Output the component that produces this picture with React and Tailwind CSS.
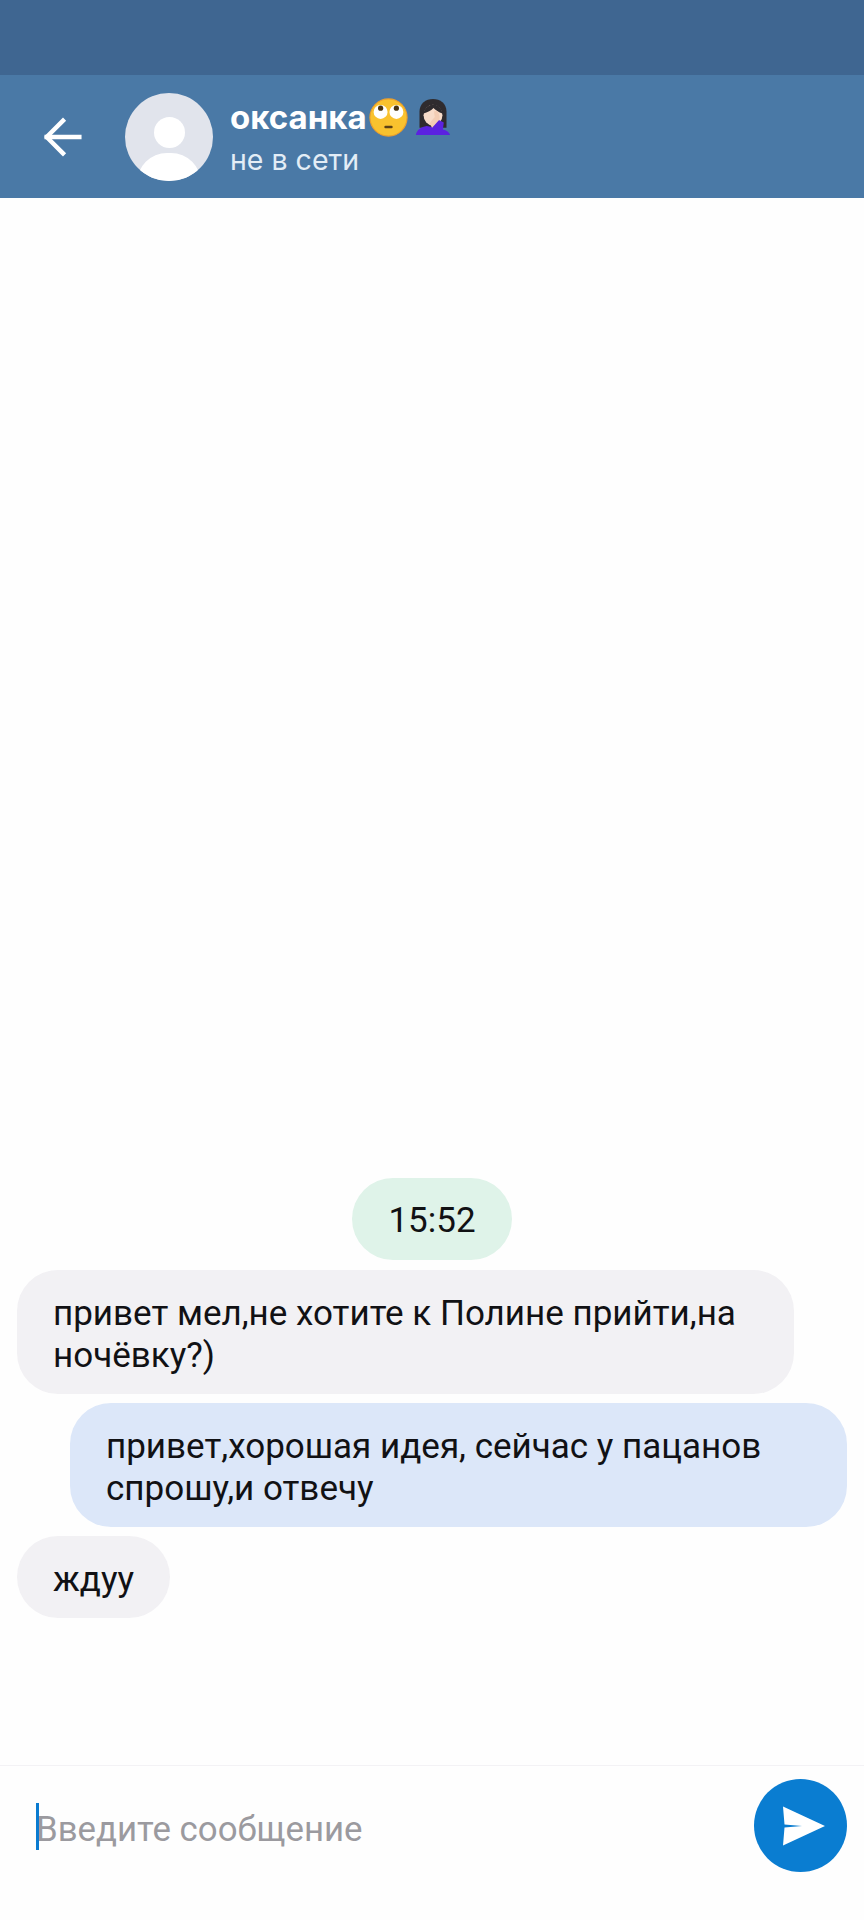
import React from "react";
import { ArrowLeft } from "lucide-react";

const messages = [
  { id: 1, mine: false, text: "привет мел,не хотите к Полине прийти,на ночёвку?)" },
  { id: 2, mine: true, text: "привет,хорошая идея, сейчас у пацанов спрошу,и отвечу" },
  { id: 3, mine: false, text: "ждуу" },
];

const RollingEyes = () => (
  <svg width="39" height="39" viewBox="0 0 42 42">
    <circle cx="21" cy="21" r="20" fill="#f9c22e" />
    <circle cx="21" cy="21" r="20" fill="none" stroke="#ee9f2a" strokeWidth="1.2" />
    <circle cx="12.5" cy="15" r="7.5" fill="#fff" />
    <circle cx="29.5" cy="15" r="7.5" fill="#fff" />
    <circle cx="12.5" cy="11" r="2.8" fill="#4a3410" />
    <circle cx="29.5" cy="11" r="2.8" fill="#4a3410" />
    <rect x="16.5" y="30" width="9" height="2.6" rx="1.3" fill="#5b4015" />
  </svg>
);

const FacepalmGirl = () => (
  <svg width="36" height="40" viewBox="0 0 40 42">
    <path d="M5 33V15C5 6 12 1 20 1s15 5 15 14v18z" fill="#2f2b2e" />
    <ellipse cx="20" cy="19" rx="10.5" ry="11.5" fill="#f8dcc9" />
    <path d="M9.5 17c1-7 7-10 11-10 4 0 9 3 10 10-4-1-8-4-10-6-2 3-7 5-11 6z" fill="#2f2b2e" />
    <path d="M1 41c1-6 6-9 12-10l6 1 7-8 6 3-1 8c4 1 7 3 8 6z" fill="#5b22e0" />
    <path d="M19 33l8-9c1-3 0-8-3-10l-3 1 1 6-6 7z" fill="#f3cdb4" />
  </svg>
);

export default function App() {
  return (
    <div className="flex h-[1920px] w-[864px] flex-col bg-[#fefefe] font-['Roboto',sans-serif]">
      {/* status bar */}
      <div className="h-[75px] bg-[#3f6691]" />

      {/* chat header */}
      <div className="flex h-[123px] items-center bg-[#4a79a6] text-white">
        <div className="flex w-[125px] justify-center">
          <ArrowLeft size={56} strokeWidth={1.9} strokeLinecap="square" />
        </div>
        <div className="relative h-[88px] w-[88px] overflow-hidden rounded-full bg-[#e1e4ec]">
          <div className="mx-auto mt-[24px] h-[31px] w-[31px] rounded-full bg-white" />
          <div className="mx-auto mt-[5px] h-[60px] w-[64px] rounded-full bg-white" />
        </div>
        <div className="ml-[17px] flex flex-col font-['Inter',sans-serif]">
          <div className="-mt-[2px] flex h-[44px] items-center">
            <span className="text-[33px] font-bold leading-none">оксанка</span>
            <span className="ml-[2px] flex"><RollingEyes /></span>
            <span className="ml-[7px] flex"><FacepalmGirl /></span>
          </div>
          <span className="mt-[5px] text-[28.5px] leading-[32px] text-[#e3edf6]">не в сети</span>
        </div>
      </div>

      {/* messages */}
      <div className="flex flex-1 flex-col justify-end gap-[9px] px-[17px] pb-[147px] text-[35px] leading-[42px] text-[#111114]">
        <div className="mb-[1px] self-center rounded-[41px] bg-[#dff3e9] px-[36px] pb-[18px] pt-[22px]">
          15:52
        </div>
        {messages.map((m) => (
          <div
            key={m.id}
            className={`rounded-[41px] px-[36px] pb-[17px] pt-[23px] ${
              m.mine ? "ml-auto w-[777px] bg-[#dce7f9]" : "bg-[#f2f1f4]"
            } ${!m.mine && m.text.length > 10 ? "w-[777px]" : ""} ${
              m.text.length <= 10 ? "self-start" : ""
            }`}
          >
            {m.text}
          </div>
        ))}
      </div>

      {/* input row */}
      <div className="flex h-[155px] items-start border-t border-[#f3f2f5] pl-[36px] pr-[17px] pt-[13px]">
        <div className="relative mt-[29px] flex-1 text-[34.8px] leading-[42px] text-[#9b9a9f]">
          <span className="absolute left-0 top-[-5px] h-[47px] w-[3px] bg-[#0a7bd0]" />
          Введите сообщение
        </div>
        <button className="flex h-[93px] w-[93px] items-center justify-center rounded-full bg-[#0a7dd1]">
          <svg width="44" height="40" viewBox="0 0 44 40" className="ml-[6px]">
            <path d="M1 0.5L43 20L1 39.5L2.5 21.5L20 20L2.5 18.5Z" fill="#fff" />
          </svg>
        </button>
      </div>
    </div>
  );
}
